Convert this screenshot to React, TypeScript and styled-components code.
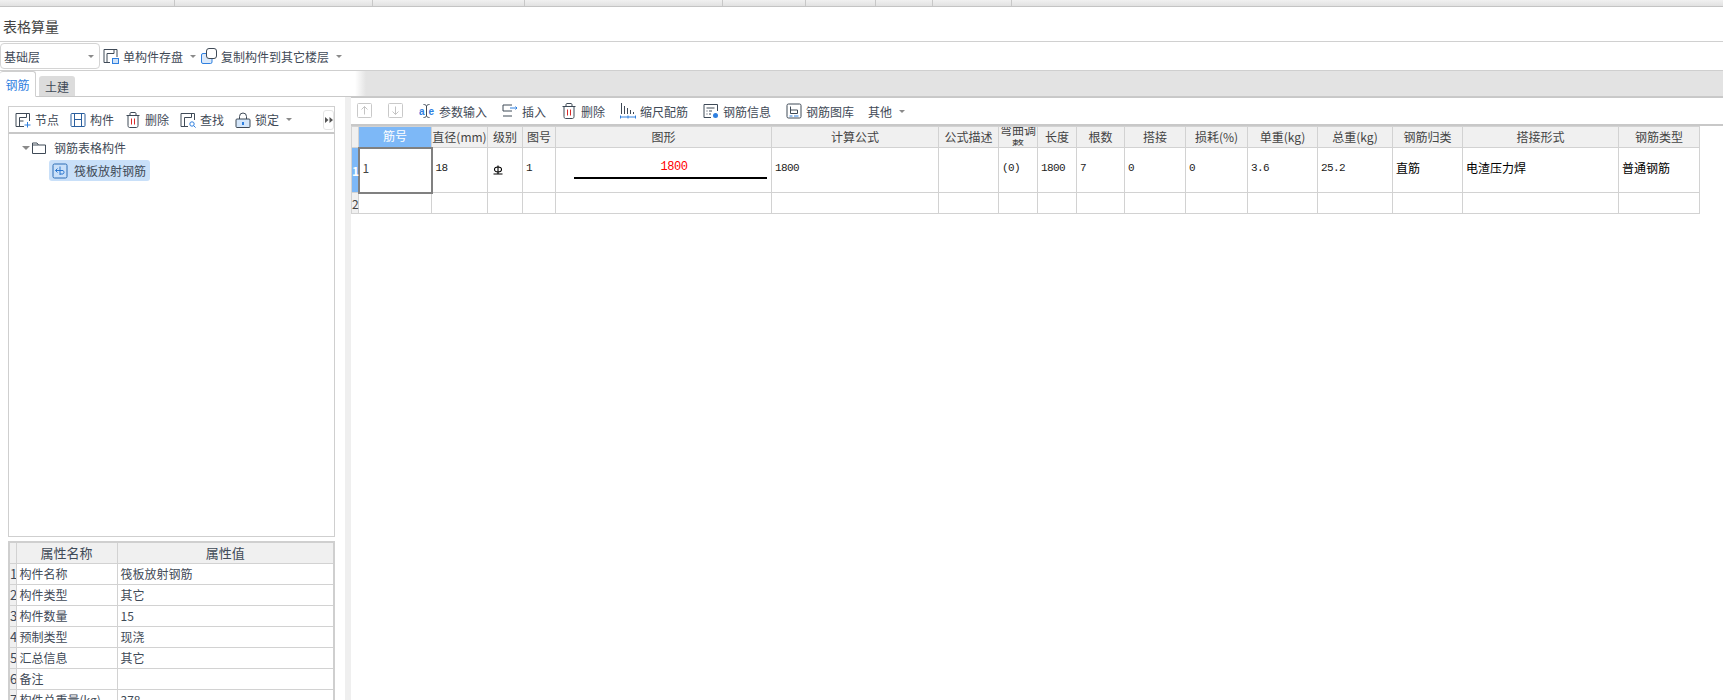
import styled, { createGlobalStyle } from "styled-components";
import { ReactNode } from "react";

const GlobalStyle = createGlobalStyle`
  html, body {
    margin: 0;
    padding: 0;
    background: #fff;
  }
  * {
    box-sizing: border-box;
  }
`;

const ink = "#3f4a57";
const blue = "#2f80e0";

// ---------- icons, all 16x16 ----------
const Svg = ({ children, size = 16 }: { children: ReactNode; size?: number }) => (
  <svg width={size} height={size} viewBox="0 0 16 16" fill="none" stroke={ink} strokeWidth="1">
    {children}
  </svg>
);

const NodeIcon = () => (
  <Svg>
    <path d="M9 14.5H1V1.500h13.500V9" />
    <path d="M4.500 14V5.500h7V2M4.500 9h4" />
    <path d="M12.500 10v5.500M9.500 13h6" stroke={blue} />
  </Svg>
);
const ComponentIcon = () => (
  <Svg>
    <rect x="1" y="1.500" width="14" height="13" rx="1" stroke="#2b5f9e" />
    <path d="M4.500 2v12M11.500 2v12M4.500 7.500h7" stroke="#2b5f9e" />
  </Svg>
);
const TrashIcon = () => (
  <Svg>
    <path d="M1.500 3.500h13M5 3.500V1.500c0-.5.500-1 1-1h4c.5 0 1 .5 1 1v2" />
    <path d="M3 3.500v10c0 1 .5 2 1.500 2h7c1 0 1.500-1 1.500-2v-10" />
    <path d="M6.500 6.500v6M9.500 6.500v6" stroke="#d92b2b" />
  </Svg>
);
const FindIcon = () => (
  <Svg>
    <path d="M8 14.500H1V1.500h13.500V8" />
    <path d="M4.500 14V5.500h7V2" />
    <circle cx="12" cy="12" r="2.200" stroke={blue} />
    <path d="M13.600 13.600l2 2" stroke={blue} />
  </Svg>
);
const LockIcon = () => (
  <Svg>
    <path d="M4.500 7V4.500a3.500 3.500 0 0 1 7 0V7" />
    <rect x="1" y="7" width="14" height="8.500" rx="1" fill="#d4e6fa" />
    <path d="M8 10v3" stroke={blue} strokeWidth="2" />
  </Svg>
);
const SaveDiskIcon = () => (
  <Svg>
    <path d="M7 14.500H1V1.500h13V9" />
    <path d="M4 14V5.500h7V2" />
    <rect x="9.500" y="10.500" width="6" height="5" fill="#cfe2f8" stroke={blue} />
  </Svg>
);
const CopyIcon = () => (
  <Svg>
    <rect x="0.500" y="5.500" width="10.500" height="10" rx="1.500" fill="#dbe9fa" stroke={blue} />
    <rect x="5.500" y="0.500" width="10" height="10" rx="2.500" fill="#fff" />
  </Svg>
);
const FolderIcon = () => (
  <Svg>
    <path d="M1.500 13.500V3h4.500l1.500 2h7v8.500z" />
    <path d="M1.500 5h6" />
  </Svg>
);
const LeafIcon = () => (
  <Svg>
    <rect x="1" y="1" width="14" height="14" rx="1.500" stroke="#2c6cb4" />
    <path d="M8 3.500v8.500M3.500 7.500h7.500a2 2 0 0 1 0 3.500H8M3.500 7.500l2-2M3.500 7.500l2 2" stroke="#2c78d0" />
  </Svg>
);
const ArrowBox = ({ down }: { down?: boolean }) => (
  <Svg>
    <rect x="0.500" y="0.500" width="14" height="14" rx="1" stroke="#c9c9c9" />
    <path d={down ? "M7.500 3.500v8M4.500 8.500l3 3 3-3" : "M7.500 11.500v-8M4.500 6.500l3-3 3 3"} stroke="#c4c4c4" />
  </Svg>
);
const ParamIcon = () => (
  <svg width="16" height="16" viewBox="0 0 16 16" fill="none">
    <path d="M4.500 1.500c1.500 0 2.500.5 3 1.500.5-1 1.500-1.500 3-1.500M4.500 14.500c1.500 0 2.500-.5 3-1.500.5 1 1.500 1.500 3 1.500M7.500 3v10" stroke={ink} />
    <text x="0" y="12" fontFamily="Liberation Sans, sans-serif" fontWeight="700" fontSize="10" fill={blue}>a</text>
    <text x="9.500" y="12" fontFamily="Liberation Sans, sans-serif" fontWeight="700" fontSize="10" fill={blue}>e</text>
  </svg>
);
const InsertIcon = () => (
  <Svg>
    <path d="M10 2H1v6h9M1 13h9" />
    <path d="M8 5h7M13.500 3.500L15 5l-1.500 1.500" stroke={blue} />
  </Svg>
);
const ScaleIcon = () => (
  <Svg>
    <path d="M1.500 0v11M4.500 3v8M7.500 5v6M10.500 7v4M13.500 9v2" />
    <path d="M0.500 14h15M0.500 12.500v3M15.500 12.500v3M8 12.500v3" stroke={blue} />
  </Svg>
);
const InfoIcon = () => (
  <Svg>
    <path d="M8 14.500H1V1.500h13.500V8" />
    <path d="M3.500 5h8M3.500 8h1M6 8h3M3.500 11h1M6 11h2" />
    <circle cx="12.500" cy="12.500" r="2.500" fill={blue} stroke="none" />
  </Svg>
);
const LibraryIcon = () => (
  <Svg>
    <rect x="1" y="1" width="14" height="14" rx="1.500" />
    <path d="M4.500 3.500v7h7V7h-7" />
    <path d="M3.500 13h3M8 13h4.500" stroke={blue} />
  </Svg>
);
const GradeSymbol = () => (
  <svg width="10" height="10" viewBox="0 0 10 10" fill="none" stroke="#000" strokeWidth="1.100">
    <path d="M5 .5v8M.5 9h9" />
    <ellipse cx="5" cy="4.500" rx="3.500" ry="2.500" />
  </svg>
);
const DoubleArrow = () => (
  <svg width="8" height="6" viewBox="0 0 8 6" fill="#555">
    <path d="M0 0l3.500 3L0 6zM4.500 0L8 3 4.500 6z" />
  </svg>
);

// ---------- layout ----------
const Page = styled.div`
  display: flex;
  flex-direction: column;
  width: 100vw;
  height: 100vh;
  overflow: hidden;
  font-family: "Noto Sans CJK SC", "Noto Sans", sans-serif;
  font-size: 12px;
  color: ${ink};
`;

const TopStrip = styled.div`
  display: flex;
  height: 7px;
  flex: none;
  background: linear-gradient(#f1f1f1, #e2e2e2);
  border-bottom: 1px solid #c4c4c4;
`;

const StripCell = styled.div<{ $w: number }>`
  width: ${(p) => p.$w}px;
  border-right: 1px solid #c8c8c8;
`;

const TitleBar = styled.div`
  display: flex;
  align-items: center;
  height: 35px;
  flex: none;
  padding: 3px 0 0 3px;
  font-size: 14px;
  border-bottom: 1px solid #d0d0d0;
  color: #444;
`;

const FloorBar = styled.div`
  display: flex;
  align-items: center;
  height: 29px;
  flex: none;
  border-bottom: 1px solid #cfcfcf;
`;

const FloorSelect = styled.div`
  display: flex;
  align-items: center;
  justify-content: space-between;
  width: 100px;
  height: 26px;
  padding: 0 5px 0 3px;
  margin-right: 3px;
  border: 1px solid #d4d4d4;
  border-radius: 4px;
  font-size: 12px;
`;

const Caret = styled.span`
  display: inline-block;
  width: 0;
  height: 0;
  margin-left: 3px;
  border-left: 3px solid transparent;
  border-right: 3px solid transparent;
  border-top: 3px solid #8a8a8a;
`;

const FloorAction = styled.div`
  display: flex;
  align-items: center;
  gap: 4px;
  margin-right: 5px;
`;

const TabBar = styled.div`
  display: flex;
  align-items: flex-end;
  gap: 3px;
  height: 26px;
  flex: none;
  background: linear-gradient(90deg, #fff 355px, #e3e3e3 366px);
  border-bottom: 1px solid #c9c9c9;
`;

const Tab = styled.div<{ $active?: boolean }>`
  display: flex;
  align-items: center;
  justify-content: center;
  height: ${(p) => (p.$active ? 26 : 21)}px;
  width: 36px;
  margin-bottom: -1px;
  font-size: 12px;
  border-radius: 3px 3px 0 0;
  background: ${(p) => (p.$active ? "#fff" : "#dcdcdc")};
  color: ${(p) => (p.$active ? blue : ink)};
  border: ${(p) => (p.$active ? "1px solid #cfcfcf" : "none")};
  border-left: none;
  border-bottom: ${(p) => (p.$active ? "1px solid #fff" : "1px solid #c9c9c9")};
`;

const Main = styled.div`
  display: flex;
  flex: 1;
  min-height: 0;
`;

const LeftPanel = styled.div`
  display: flex;
  flex-direction: column;
  width: 345px;
  flex: none;
  padding: 9px 10px 0 8px;
`;

const Splitter = styled.div`
  width: 6px;
  flex: none;
  background: #efefef;
`;

const TreeToolbar = styled.div`
  position: relative;
  display: flex;
  align-items: center;
  height: 28px;
  flex: none;
  padding-left: 6px;
  border: 1px solid #cfcfcf;
  border-bottom: 2px solid #c8c8c8;
`;

const TreeTool = styled.div`
  display: flex;
  align-items: center;
  gap: 4px;
  margin-right: 11px;
`;

const MoreButton = styled.div`
  position: absolute;
  right: 0;
  top: 3px;
  display: flex;
  align-items: center;
  justify-content: center;
  width: 11px;
  height: 20px;
  border: 1px solid #e4e4e4;
  border-radius: 3px;
`;

const TreeBox = styled.div`
  flex: none;
  height: 403px;
  padding-top: 3px;
  border: 1px solid #cfcfcf;
  border-top: none;
`;

const TreeRow = styled.div`
  display: flex;
  align-items: center;
  gap: 7px;
  height: 21px;
  padding-left: 13px;
`;

const TreeCaret = styled(Caret)`
  margin: 0 -6px 0 0;
  border-left-width: 4px;
  border-right-width: 4px;
  border-top-width: 4px;
`;

const TreeLeaf = styled.div`
  display: inline-flex;
  align-items: center;
  gap: 6px;
  height: 21px;
  margin: 2px 0 0 40px;
  padding: 0 4px 0 3px;
  background: #c9e0f9;
  border-radius: 3px;
`;

const PropTable = styled.table`
  flex: none;
  width: 327px;
  margin-top: 4px;
  table-layout: fixed;
  border-collapse: collapse;
  border: 2px solid #cfcfcf;
  border-bottom: none;
  font-size: 12px;

  th {
    height: 21px;
    padding: 0;
    font-size: 13px;
    font-weight: 400;
    background: #f0f0f0;
    border: 1px solid #d2d2d2;
  }
  td {
    height: 21px;
    padding: 0 0 0 3px;
    border: 1px solid #d2d2d2;
    white-space: nowrap;
    overflow: hidden;
  }
  td:first-child {
    padding: 0;
    font-size: 13px;
    text-align: center;
    background: #f0f0f0;
  }
`;

const RightPanel = styled.div`
  flex: 1;
  min-width: 0;
`;

const GridToolbar = styled.div`
  display: flex;
  align-items: center;
  height: 29px;
  padding-left: 6px;
  border-top: 1px solid #c8c8c8;
  border-bottom: 2px solid #c8c8c8;
`;

const GridTool = styled.div<{ $ml: number }>`
  display: flex;
  align-items: center;
  gap: 4px;
  margin-left: ${(p) => p.$ml}px;
`;

const Grid = styled.table`
  width: 1348px;
  table-layout: fixed;
  border-collapse: collapse;
  font-size: 12px;

  th {
    height: 21px;
    padding: 0 0 1px;
    font-weight: 400;
    line-height: 16px;
    background: #f0f0f0;
    border: 1px solid #d2d2d2;
    color: #444;
    white-space: nowrap;
    overflow: hidden;
  }
  td {
    padding: 0 0 5px 3px;
    border: 1px solid #d2d2d2;
    color: #000;
  }
`;

const ActiveHead = styled.th`
  && {
    background: #7db8f7;
    color: #fff;
  }
`;

const WrapHead = styled.div`
  display: flex;
  align-items: center;
  height: 19px;
  overflow: hidden;
  white-space: normal;
  line-height: 15px;
  text-align: center;
`;

const RowHead = styled.td<{ $active?: boolean }>`
  && {
    padding: 0;
    text-align: center;
    background: ${(p) => (p.$active ? "#7db8f7" : "#f0f0f0")};
    color: ${(p) => (p.$active ? "#fff" : "#444")};
    font-weight: ${(p) => (p.$active ? 700 : 400)};
  }
`;

const DataRow = styled.tr<{ $h: number }>`
  height: ${(p) => p.$h}px;
`;

const ActiveCell = styled.td`
  && {
    border: 2px solid #808080;
    font-size: 12px;
    color: #444;
  }
`;

const NumCell = styled.td`
  && {
    font-family: "Liberation Mono", monospace;
    font-size: 11px;
    letter-spacing: -0.6px;
    color: #222;
  }
`;

const SymbolCell = styled.td`
  && {
    padding: 0 0 0 5px;
    line-height: 0;
  }
`;

const ShapeCell = styled.td`
  && {
    padding: 0 4px 2px 18px;
  }
`;

const ShapeLabel = styled.div`
  font-family: "Liberation Mono", monospace;
  font-size: 12px;
  letter-spacing: -0.5px;
  line-height: 14px;
  padding-left: 7px;
  text-align: center;
  color: #f00;
`;

const ShapeLine = styled.div`
  height: 2px;
  margin-top: 3px;
  background: #000;
`;

const stripWidths = [175, 198, 152, 198, 83, 70, 57, 79];
const props = [
  ["构件名称", "筏板放射钢筋"],
  ["构件类型", "其它"],
  ["构件数量", "15"],
  ["预制类型", "现浇"],
  ["汇总信息", "其它"],
  ["备注", ""],
  ["构件总重量(kg)", "378"],
];
const colWidths = [7, 73, 56, 35, 33, 216, 167, 60, 39, 39, 48, 61, 62, 70, 75, 70, 156, 81];
const heads = ["直径(mm)", "级别", "图号", "图形", "计算公式", "公式描述"];
const tailHeads = ["长度", "根数", "搭接", "损耗(%)", "单重(kg)", "总重(kg)", "钢筋归类", "搭接形式", "钢筋类型"];

export default function App() {
  return (
    <Page>
      <GlobalStyle />
      <TopStrip>
        {stripWidths.map((w, i) => (
          <StripCell key={i} $w={w} />
        ))}
      </TopStrip>
      <TitleBar>表格算量</TitleBar>
      <FloorBar>
        <FloorSelect>
          基础层
          <Caret />
        </FloorSelect>
        <FloorAction>
          <SaveDiskIcon />
          <span>单构件存盘</span>
          <Caret />
        </FloorAction>
        <FloorAction>
          <CopyIcon />
          <span>复制构件到其它楼层</span>
          <Caret />
        </FloorAction>
      </FloorBar>
      <TabBar>
        <Tab $active>钢筋</Tab>
        <Tab>土建</Tab>
      </TabBar>
      <Main>
        <LeftPanel>
          <TreeToolbar>
            <TreeTool><NodeIcon />节点</TreeTool>
            <TreeTool><ComponentIcon />构件</TreeTool>
            <TreeTool><TrashIcon />删除</TreeTool>
            <TreeTool><FindIcon />查找</TreeTool>
            <TreeTool><LockIcon />锁定<Caret /></TreeTool>
            <MoreButton><DoubleArrow /></MoreButton>
          </TreeToolbar>
          <TreeBox>
            <TreeRow>
              <TreeCaret />
              <FolderIcon />
              钢筋表格构件
            </TreeRow>
            <TreeLeaf>
              <LeafIcon />
              筏板放射钢筋
            </TreeLeaf>
          </TreeBox>
          <PropTable>
            <colgroup>
              <col width="7" />
              <col width="101" />
              <col />
            </colgroup>
            <thead>
              <tr>
                <th />
                <th>属性名称</th>
                <th>属性值</th>
              </tr>
            </thead>
            <tbody>
              {props.map(([name, value], i) => (
                <tr key={name}>
                  <td>{i + 1}</td>
                  <td>{name}</td>
                  <td>{value}</td>
                </tr>
              ))}
            </tbody>
          </PropTable>
        </LeftPanel>
        <Splitter />
        <RightPanel>
          <GridToolbar>
            <GridTool $ml={0}><ArrowBox /></GridTool>
            <GridTool $ml={15}><ArrowBox down /></GridTool>
            <GridTool $ml={15}><ParamIcon />参数输入</GridTool>
            <GridTool $ml={15}><InsertIcon />插入</GridTool>
            <GridTool $ml={15}><TrashIcon />删除</GridTool>
            <GridTool $ml={15}><ScaleIcon />缩尺配筋</GridTool>
            <GridTool $ml={15}><InfoIcon />钢筋信息</GridTool>
            <GridTool $ml={15}><LibraryIcon />钢筋图库</GridTool>
            <GridTool $ml={14}>其他<Caret /></GridTool>
          </GridToolbar>
          <Grid>
            <colgroup>
              {colWidths.map((w, i) => (
                <col key={i} width={w} />
              ))}
            </colgroup>
            <thead>
              <tr>
                <th />
                <ActiveHead>筋号</ActiveHead>
                {heads.map((h) => (
                  <th key={h}>{h}</th>
                ))}
                <th>
                  <WrapHead>弯曲调整</WrapHead>
                </th>
                {tailHeads.map((h) => (
                  <th key={h}>{h}</th>
                ))}
              </tr>
            </thead>
            <tbody>
              <DataRow $h={45}>
                <RowHead $active>1</RowHead>
                <ActiveCell>1</ActiveCell>
                <NumCell>18</NumCell>
                <SymbolCell><GradeSymbol /></SymbolCell>
                <NumCell>1</NumCell>
                <ShapeCell>
                  <ShapeLabel>1800</ShapeLabel>
                  <ShapeLine />
                </ShapeCell>
                <NumCell>1800</NumCell>
                <td />
                <NumCell>(0)</NumCell>
                <NumCell>1800</NumCell>
                <NumCell>7</NumCell>
                <NumCell>0</NumCell>
                <NumCell>0</NumCell>
                <NumCell>3.6</NumCell>
                <NumCell>25.2</NumCell>
                <td>直筋</td>
                <td>电渣压力焊</td>
                <td>普通钢筋</td>
              </DataRow>
              <DataRow $h={21}>
                <RowHead>2</RowHead>
                {colWidths.slice(1).map((_, i) => (
                  <td key={i} />
                ))}
              </DataRow>
            </tbody>
          </Grid>
        </RightPanel>
      </Main>
    </Page>
  );
}
